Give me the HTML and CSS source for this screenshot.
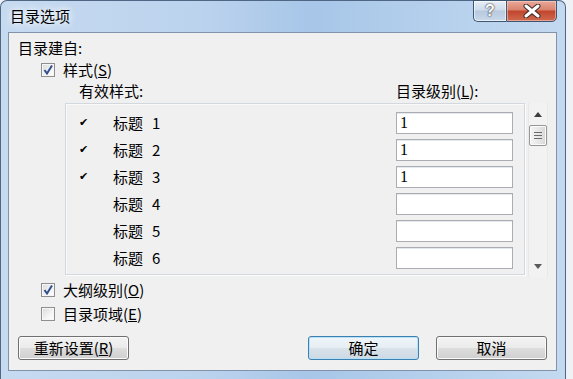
FILE: index.html
```html
<!DOCTYPE html>
<html lang="zh-CN">
<head>
    <meta charset="UTF-8">
    <title>目录选项</title>
    <link rel="stylesheet" href="styles.css">
</head>
<body>

    <div class="window">
        <div class="titlebar">
            <span class="title">目录选项</span>
            <div class="caption-buttons">
                <div class="cap-btn help">?</div>
                <div class="cap-btn close">
                    <svg width="18" height="14" viewBox="0 0 18 14">
                        <path d="M3 2 L15 12 M15 2 L3 12" stroke="#3a2a28" stroke-width="5" stroke-linecap="round"/>
                        <path d="M3 2 L15 12 M15 2 L3 12" stroke="#fff" stroke-width="3" stroke-linecap="round"/>
                    </svg>
                </div>
            </div>
        </div>

        <div class="client">
            <div class="build-label">目录建自:</div>

            <div class="check-row first">
                <span class="checkbox checked"></span>
                <span>样式(<u>S</u>)</span>
            </div>

            <div class="list-head">
                <span class="head-styles">有效样式:</span>
                <span>目录级别(<u>L</u>):</span>
            </div>

            <div class="list-area">
                <div class="list">
                    <div class="row"><span class="mark">&#10004;</span><span>标题<span class="num">1</span></span><span class="level">1</span></div>
                    <div class="row"><span class="mark">&#10004;</span><span>标题<span class="num">2</span></span><span class="level">1</span></div>
                    <div class="row"><span class="mark">&#10004;</span><span>标题<span class="num">3</span></span><span class="level">1</span></div>
                    <div class="row"><span class="mark"></span><span>标题<span class="num">4</span></span><span class="level"></span></div>
                    <div class="row"><span class="mark"></span><span>标题<span class="num">5</span></span><span class="level"></span></div>
                    <div class="row"><span class="mark"></span><span>标题<span class="num">6</span></span><span class="level"></span></div>
                </div>
                <div class="scrollbar">
                    <div class="arrow up"></div>
                    <div class="thumb"><span></span><span></span><span></span></div>
                    <div class="track"></div>
                    <div class="arrow down"></div>
                </div>
            </div>

            <div class="check-row outline">
                <span class="checkbox checked"></span>
                <span>大纲级别(<u>O</u>)</span>
            </div>
            <div class="check-row fields">
                <span class="checkbox"></span>
                <span>目录项域(<u>E</u>)</span>
            </div>

            <div class="button-row">
                <button class="btn">重新设置(<u>R</u>)</button>
                <button class="btn default ok">确定</button>
                <button class="btn">取消</button>
            </div>
        </div>
    </div>

</body>
</html>
```

FILE: styles.css
```css
* {
    margin: 0;
    padding: 0;
    box-sizing: border-box;
}

body {
    width: 573px;
    height: 379px;
    overflow: hidden;
    background-color: #eef2f7;
    font-family: "Noto Sans CJK SC", "Noto Sans", sans-serif;
    font-size: 15px;
    color: #000;
}

.window {
    width: 566px;
    height: 379px;
    border: 1px solid #4f6684;
    border-bottom: none;
    border-radius: 7px 7px 0 0;
    background: linear-gradient(to right, #c6daf0 0%, #bcd3ee 35%, #a7c6e8 55%, #b4cfec 75%, #c3d9f0 100%);
    padding: 0 8px 8px 7px;
    display: flex;
    flex-direction: column;
}

/* title bar */
.titlebar {
    height: 31px;
    display: flex;
    justify-content: space-between;
    align-items: flex-start;
}

.title {
    margin: 5px 0 0 2px;
    font-size: 15px;
    line-height: 20px;
    text-shadow: 0 0 6px #fff, 0 0 10px rgba(255, 255, 255, 0.9);
}

.caption-buttons {
    display: flex;
    margin-top: -1px;
}

.cap-btn {
    height: 22px;
    border: 1px solid #3f5670;
    display: flex;
    justify-content: center;
    align-items: center;
}

.help {
    width: 33px;
    border-right: none;
    border-radius: 0 0 0 5px;
    background: linear-gradient(#e6eef7 0%, #cfdcec 45%, #b7c9df 50%, #c9d9eb 100%);
    box-shadow: inset 0 0 0 1px rgba(255, 255, 255, 0.6);
    font-family: "Liberation Sans", sans-serif;
    font-weight: bold;
    font-size: 16px;
    color: #fff;
    text-shadow: 0 0 2px #333, 0 0 1px #333;
}

.close {
    width: 51px;
    border-radius: 0 0 5px 0;
    background: linear-gradient(#e9a99a 0%, #d9826d 45%, #c2452d 50%, #cf6a4f 100%);
    box-shadow: inset 0 0 0 1px rgba(255, 220, 210, 0.5);
}

/* client area */
.client {
    flex: 1;
    background-color: #f0f0f0;
    border: 1px solid #8093ab;
    padding: 6px 9px 0;
    display: flex;
    flex-direction: column;
}

.build-label {
    line-height: 18px;
}

.check-row {
    display: flex;
    align-items: center;
    height: 18px;
    margin-left: 23px;
    line-height: 18px;
}

.check-row.first {
    margin-top: 4px;
}

.check-row.outline {
    margin-top: 4px;
}

.check-row.fields {
    margin-top: 6px;
}

.checkbox {
    width: 14px;
    height: 14px;
    margin-right: 8px;
    border: 1px solid #8e8f8f;
    background: linear-gradient(135deg, #d9d9d9 0%, #f4f4f4 60%, #ffffff 100%);
    box-shadow: inset 0 0 0 1px #f6f6f6;
}

.checkbox.checked {
    background-color: #f4f4f4;
    background-image: url("data:image/svg+xml;utf8,<svg xmlns='http://www.w3.org/2000/svg' width='12' height='12' viewBox='0 0 12 12'><path d='M2.5 6 L5 9.5 L10 1.5' fill='none' stroke='%23324f8e' stroke-width='2'/></svg>"), linear-gradient(135deg, #d9d9d9 0%, #f4f4f4 60%, #ffffff 100%);
    background-repeat: no-repeat;
    background-position: center;
}

u {
    text-decoration: underline;
    text-underline-offset: 1px;
}

.list-head {
    display: flex;
    margin-top: 3px;
    line-height: 18px;
}

.head-styles {
    width: 378px;
    padding-left: 61px;
}

/* styles list */
.list-area {
    display: flex;
    margin: 3px 0 0 47px;
}

.list {
    width: 460px;
    height: 172px;
    flex-shrink: 0;
    border: 1px solid #d3d8de;
    box-shadow: 1px 1px 0 #fcfcfc, inset 1px 1px 0 #fafafa;
    padding-top: 5px;
}

.row {
    display: grid;
    grid-template-columns: 47px 283px 117px;
    align-items: center;
    height: 27px;
    line-height: 18px;
}

.num {
    margin-left: 9px;
}

.mark {
    padding-left: 13px;
    font-size: 11px;
    font-family: "DejaVu Sans", sans-serif;
}

.level {
    height: 22px;
    background-color: #fff;
    border: 1px solid #abadb3;
    box-shadow: inset 0 1px 0 #e3e9ef;
    padding-left: 3px;
    line-height: 20px;
    font-family: "Liberation Serif", serif;
    font-size: 16px;
}

.scrollbar {
    width: 20px;
    height: 174px;
    flex-shrink: 0;
    margin-left: 3px;
    display: flex;
    flex-direction: column;
    align-items: center;
    background-color: #f2f2f2;
    border-left: 1px solid #e8e8e8;
    border-right: 1px solid #e8e8e8;
}

.arrow {
    height: 22px;
    width: 100%;
    display: flex;
    justify-content: center;
    align-items: center;
}

.arrow::after {
    content: "";
    border-left: 4px solid transparent;
    border-right: 4px solid transparent;
}

.arrow.up::after {
    border-bottom: 5px solid #3d3d3d;
}

.arrow.down::after {
    border-top: 5px solid #5a5a5a;
}

.thumb {
    width: 18px;
    height: 21px;
    border: 1px solid #979797;
    border-radius: 2px;
    background: linear-gradient(to right, #f5f5f5 0%, #e8e8e8 50%, #d6d6d6 100%);
    box-shadow: inset 0 0 0 1px #fbfbfb;
    display: flex;
    flex-direction: column;
    justify-content: center;
    align-items: center;
    gap: 2px;
}

.thumb span {
    width: 8px;
    height: 1px;
    background-color: #6b6b6b;
}

.track {
    flex: 1;
}

/* buttons */
.button-row {
    display: flex;
    margin-top: 13px;
    gap: 17px;
}

.btn {
    width: 111px;
    height: 24px;
    border: 1px solid #707070;
    border-radius: 3px;
    background: linear-gradient(#f3f3f3 0%, #ebebeb 48%, #dddddd 52%, #cfcfcf 100%);
    box-shadow: inset 0 0 0 1px #fbfbfb;
    font-family: "Noto Sans CJK SC", sans-serif;
    font-size: 15px;
    line-height: 20px;
    color: #000;
}

.btn.ok {
    margin-left: auto;
}

.btn.default {
    border-color: #3c7fb1;
    box-shadow: inset 0 0 0 1px #b6e1f6;
    background: linear-gradient(#f0f6fa 0%, #e6eef4 48%, #d8e2ea 52%, #cdd9e3 100%);
}
```
